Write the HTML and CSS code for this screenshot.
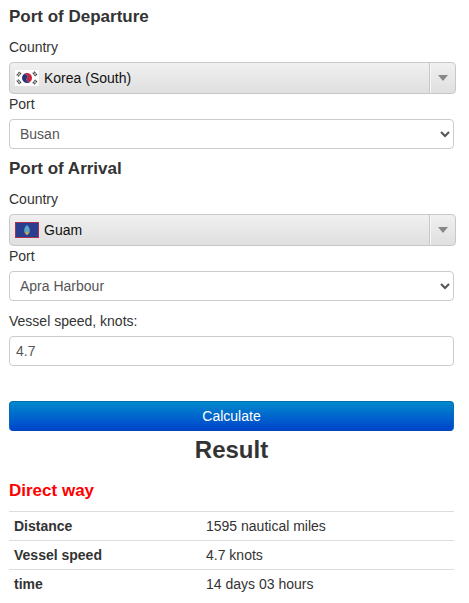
FILE: index.html
```html
<!DOCTYPE html>
<html lang="en">
<head>
  <meta charset="UTF-8" />
  <title>Sea route calculator</title>
  <link rel="stylesheet" href="styles.css">
</head>
<body>

  <form class="calc">
    <h3>Port of Departure</h3>
    <label>Country</label>
    <div class="combo">
      <svg class="flag" viewBox="0 0 24 16">
        <rect width="24" height="16" fill="#fff"/>
        <g transform="rotate(33 12 8)">
          <path d="M7 8a5 5 0 0 1 10 0 2.500 2.500 0 0 1-5 0 2.500 2.500 0 0 0-5 0z" fill="#c4243c"/>
          <path d="M7 8a5 5 0 0 0 10 0 2.500 2.500 0 0 1-5 0 2.500 2.500 0 0 0-5 0z" fill="#24357c"/>
        </g>
        <path d="M1.800 5.500l3-3.800M3.200 6.500l3-3.800M17.800 2.700l3 3.800M19.200 1.700l3 3.800M1.800 10.500l3 3.800M3.200 9.500l3 3.800M17.800 13.300l3-3.800M19.200 14.300l3-3.800" stroke="#444" stroke-width="1.200" stroke-dasharray="2 .5"/>
      </svg>
      <span class="combo-text">Korea (South)</span>
      <span class="combo-btn"><i class="arrow"></i></span>
    </div>
    <label class="port-label">Port</label>
    <select class="field"><option>Busan</option></select>

    <h3 class="second">Port of Arrival</h3>
    <label>Country</label>
    <div class="combo">
      <svg class="flag" viewBox="0 0 24 16">
        <rect width="24" height="16" fill="#a8314f"/>
        <rect x="1" y="1" width="22" height="14" fill="#2b3d8f"/>
        <path d="M12 2.800c1.900 2 2.800 3.800 2.800 5.400 0 2.400-1.300 4.100-2.800 4.800-1.500-.7-2.800-2.400-2.800-4.800 0-1.600.9-3.400 2.800-5.400z" fill="#5aa5c8"/>
        <path d="M9.600 9.800h4.800c-.4 1.600-1.300 2.700-2.400 3.200-1.100-.5-2-1.600-2.400-3.200z" fill="#b5a65a"/>
      </svg>
      <span class="combo-text">Guam</span>
      <span class="combo-btn"><i class="arrow"></i></span>
    </div>
    <label class="port-label">Port</label>
    <select class="field"><option>Apra Harbour</option></select>

    <label class="speed-label">Vessel speed, knots:</label>
    <input class="field speed" type="text" value="4.7" />

    <button type="button" class="calc-btn">Calculate</button>
  </form>

  <h2 class="result-title">Result</h2>
  <h3 class="way">Direct way</h3>
  <table class="result">
    <tr><th>Distance</th><td>1595 nautical miles</td></tr>
    <tr><th>Vessel speed</th><td>4.7 knots</td></tr>
    <tr><th>time</th><td>14 days 03 hours</td></tr>
  </table>

</body>
</html>
```

FILE: styles.css
```css
* {
  box-sizing: border-box;
}

html, body {
  height: 603px;
  overflow: hidden;
}

body {
  margin: 0;
  padding: 0 15px 0 9px;
  font-family: "Liberation Sans", Arial, sans-serif;
  font-size: 14px;
  line-height: 20px;
  color: #333;
  background: #fff;
}

h3 {
  margin: 0;
  font-size: 17px;
  line-height: 20px;
  font-weight: bold;
  padding-top: 7px;
}

h3.second {
  padding-top: 10px;
}

label {
  display: block;
  margin-top: 10px;
  margin-bottom: 5px;
}

.port-label {
  margin-top: 0;
}

.speed-label {
  margin-top: 10px;
}

.combo {
  display: flex;
  align-items: center;
  height: 32px;
  margin-right: -2px;
  border: 1px solid #c8c8c8;
  border-radius: 4px;
  background: linear-gradient(#f0f0f0, #dfdfdf);
  color: #111;
}

.flag {
  width: 24px;
  height: 16px;
  margin-left: 5px;
  flex: none;
}

.combo-text {
  flex: 1;
  margin-left: 5px;
}

.combo-btn {
  width: 25px;
  height: 100%;
  border-left: 1px solid #f6f6f6;
  box-shadow: -1px 0 0 #c8c8c8;
  display: flex;
  align-items: center;
  justify-content: center;
}

.arrow {
  width: 0;
  height: 0;
  border-left: 5px solid transparent;
  border-right: 5px solid transparent;
  border-top: 6px solid #888;
}

.field {
  display: block;
  width: 100%;
  height: 30px;
  padding: 5px 6px;
  font-family: inherit;
  font-size: 14px;
  color: #555;
  background: #fff;
  border: 1px solid #ccc;
  border-radius: 4px;
}

.calc-btn {
  display: block;
  width: 100%;
  height: 30px;
  margin-top: 35px;
  font-family: inherit;
  font-size: 14px;
  color: #fff;
  border: 1px solid #0070b0;
  border-bottom-color: #0048b8;
  border-radius: 4px;
  background: linear-gradient(#0088cc, #0044cc);
}

.result-title {
  margin: 4px 0 0;
  font-size: 24px;
  line-height: 30px;
  font-weight: bold;
  text-align: center;
}

.way {
  color: #f00;
  padding-top: 0;
  margin-top: 16px;
  font-size: 17px;
}

.result {
  width: 100%;
  margin-top: 10px;
  border-collapse: collapse;
  table-layout: fixed;
}

.result th, .result td {
  height: 29px;
  padding: 4px 5px;
  border-top: 1px solid #ddd;
  text-align: left;
}

.result th {
  width: 192px;
}
```
